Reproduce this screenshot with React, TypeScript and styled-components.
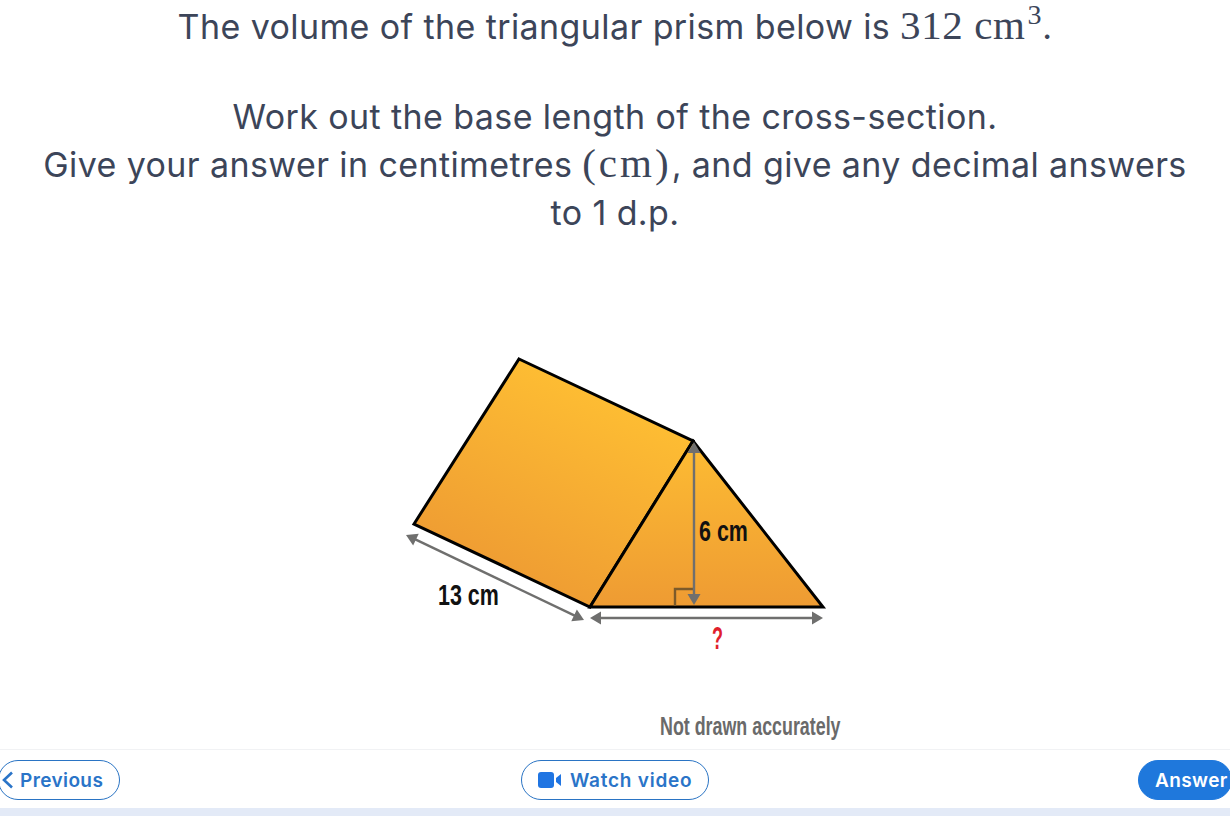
import styled, { createGlobalStyle } from "styled-components";

const GlobalStyle = createGlobalStyle`
  html, body {
    margin: 0;
    padding: 0;
    background: #fff;
    overflow: hidden;
  }
`;

const Page = styled.div`
  width: 1230px;
  height: 816px;
  display: flex;
  flex-direction: column;
  overflow: hidden;
  font-family: "Inter", "Liberation Sans", sans-serif;
`;

const Question = styled.div`
  height: 340px;
  padding-top: 3px;
  box-sizing: border-box;
  color: #3c4559;
  font-size: 34px;
  line-height: 48px;
  letter-spacing: 0.4px;
  text-align: center;
  white-space: nowrap;

  & > p {
    margin: 0 0 42px;
  }
`;

const Maths = styled.span<{ $spread?: boolean }>`
  font-family: "Liberation Serif", "DejaVu Serif", serif;
  font-size: 41px;
  line-height: 0;
  letter-spacing: ${(p) => (p.$spread ? "3px" : "0.6px")};

  & > sup {
    font-size: 28px;
    line-height: 0;
    margin-left: 2px;
  }
`;

const Figure = styled.div`
  flex: 1;
  display: flex;
  justify-content: center;

  & > svg {
    display: block;
  }
`;

const FigureText = styled.text<{ $size: number; $fill: string }>`
  font-family: "Liberation Sans", sans-serif;
  font-weight: 700;
  font-size: ${(p) => p.$size}px;
  fill: ${(p) => p.$fill};
`;

const Footer = styled.div`
  height: 59px;
  box-sizing: border-box;
  margin: 0 -2px;
  padding-top: 10px;
  border-top: 1px solid #f1f2f4;
  display: grid;
  grid-template-columns: 1fr auto 1fr;
  align-items: start;
`;

const Pill = styled.button<{ $primary?: boolean }>`
  height: 40px;
  box-sizing: border-box;
  padding: 0 16px;
  border-radius: 20px;
  border: 1px solid #2a74c4;
  background: ${(p) => (p.$primary ? "#1f78dc" : "#fff")};
  color: ${(p) => (p.$primary ? "#fff" : "#2a74c8")};
  font-family: inherit;
  font-size: 19px;
  font-weight: 600;
  letter-spacing: 0.4px;
  white-space: nowrap;
  display: flex;
  align-items: center;
  gap: 9px;
`;

const VideoPill = styled(Pill)`
  width: 188px;
  padding-right: 0;
  letter-spacing: 0.75px;
`;

const LeftCell = styled.div`
  display: flex;
  justify-content: flex-start;

  & > button {
    width: 122px;
    padding: 0 0 0 3px;
    gap: 5px;
  }
`;

const RightCell = styled.div`
  display: flex;
  justify-content: flex-end;

  & > button {
    width: 94px;
    padding: 0 0 0 16px;
    border-color: #1f78dc;
  }
`;

const BottomStrip = styled.div`
  height: 8px;
  background: #e3eaf7;
`;

function ChevronLeft() {
  return (
    <svg width="13" height="18" viewBox="0 0 13 18" fill="none">
      <path d="M10 1.5 L2 9 L10 16.5" stroke="#2a74c8" strokeWidth="2.6" />
    </svg>
  );
}

function VideoIcon() {
  return (
    <svg width="23" height="16" viewBox="0 0 23 16">
      <rect x="0" y="0" width="16" height="16" rx="3" fill="#2075e2" />
      <path d="M18 6 L23 2 V14 L18 10 Z" fill="#2075e2" />
    </svg>
  );
}

function Arrow({ x1, y1, x2, y2 }: { x1: number; y1: number; x2: number; y2: number }) {
  const len = Math.hypot(x2 - x1, y2 - y1);
  const ux = (x2 - x1) / len;
  const uy = (y2 - y1) / len;
  const head = (x: number, y: number, dx: number, dy: number) =>
    `${x},${y} ${x - dx * 11 - dy * 6.5},${y - dy * 11 + dx * 6.5} ${x - dx * 11 + dy * 6.5},${y - dy * 11 - dx * 6.5}`;
  return (
    <g>
      <line
        x1={x1 + ux * 8}
        y1={y1 + uy * 8}
        x2={x2 - ux * 8}
        y2={y2 - uy * 8}
        stroke="#6f6f6e"
        strokeWidth="2.4"
      />
      <polygon points={head(x2, y2, ux, uy)} fill="#6f6f6e" />
      <polygon points={head(x1, y1, -ux, -uy)} fill="#6f6f6e" />
    </g>
  );
}

function PrismFigure() {
  return (
    <svg width="470" height="409" viewBox="380 340 470 409">
      <defs>
        <linearGradient id="sideFill" gradientUnits="userSpaceOnUse" x1="600" y1="400" x2="510" y2="590">
          <stop offset="0" stopColor="#fdbc33" />
          <stop offset="1" stopColor="#ee9b33" />
        </linearGradient>
        <linearGradient id="endFill" gradientUnits="userSpaceOnUse" x1="700" y1="441" x2="700" y2="607">
          <stop offset="0" stopColor="#fdbc33" />
          <stop offset="1" stopColor="#ee9b33" />
        </linearGradient>
      </defs>
      <polygon
        points="519,359 693,441 590,607 414,524"
        fill="url(#sideFill)"
        stroke="#000"
        strokeWidth="3"
        strokeLinejoin="miter"
      />
      <polygon
        points="693,441 823,607 590,607"
        fill="url(#endFill)"
        stroke="#000"
        strokeWidth="3"
        strokeLinejoin="miter"
      />
      <path d="M675 606 V589 H694" fill="none" stroke="#7c5a2a" strokeWidth="2.4" />
      <Arrow x1={694} y1={442} x2={694} y2={605} />
      <Arrow x1={406} y1={535} x2={584} y2={620} />
      <Arrow x1={590} y1={618} x2={823} y2={618} />
      {/* the labels in the picture are a condensed face, so squeeze them horizontally */}
      <FigureText $size={29} $fill="#111" transform="translate(699 541) scale(0.74 1)">
        6 cm
      </FigureText>
      <FigureText $size={29} $fill="#111" transform="translate(438 605) scale(0.74 1)">
        13 cm
      </FigureText>
      <FigureText $size={31} $fill="#e0202c" transform="translate(712 649) scale(0.58 1)">
        ?
      </FigureText>
      <FigureText $size={25} $fill="#6a6a6a" transform="translate(660 735) scale(0.714 1)">
        Not drawn accurately
      </FigureText>
    </svg>
  );
}

export default function App() {
  return (
    <>
      <GlobalStyle />
      <Page>
        <Question>
          <p>
            The volume of the triangular prism below is{" "}
            <Maths>
              312 cm<sup>3</sup>
            </Maths>
            .
          </p>
          <div>Work out the base length of the cross-section.</div>
          <div>
            Give your answer in centimetres <Maths $spread>(cm)</Maths>, and give any decimal answers
          </div>
          <div>to 1 d.p.</div>
        </Question>
        <Figure>
          <PrismFigure />
        </Figure>
        <Footer>
          <LeftCell>
            <Pill>
              <ChevronLeft />
              Previous
            </Pill>
          </LeftCell>
          <VideoPill>
            <VideoIcon />
            Watch video
          </VideoPill>
          <RightCell>
            <Pill $primary>Answer</Pill>
          </RightCell>
        </Footer>
        <BottomStrip />
      </Page>
    </>
  );
}
